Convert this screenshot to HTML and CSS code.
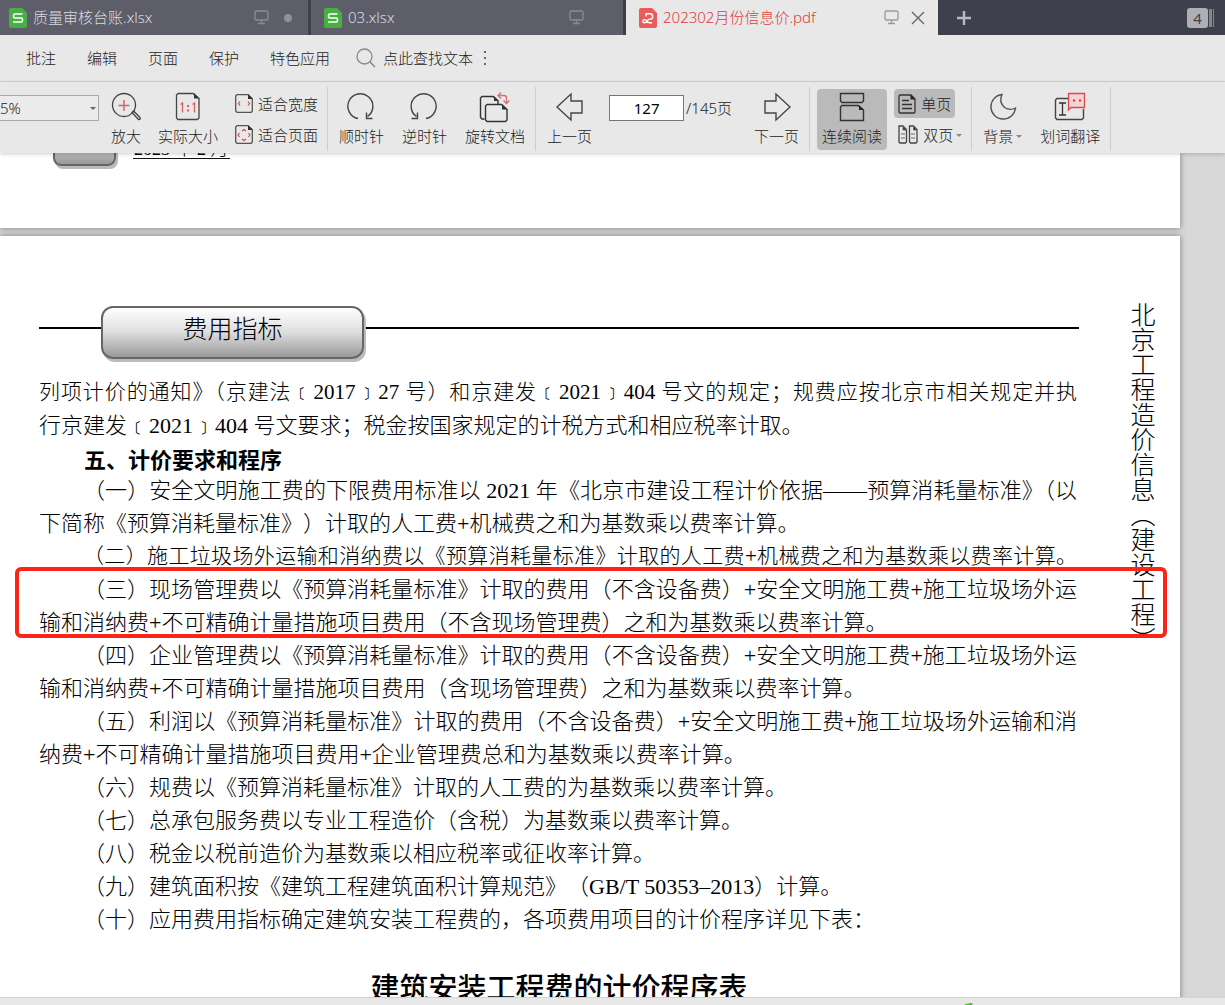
FILE: index.html
```html
<!DOCTYPE html>
<html lang="zh-CN">
<head>
<meta charset="utf-8">
<title>202302月份信息价.pdf</title>
<link rel="stylesheet" href="styles.css">
</head>
<body>
<nav class="tabs">
  <a class="tab" href="#">
    <svg width="18" height="20" viewBox="0 0 18 20"><path d="M2 0h11l5 5v13a2 2 0 0 1-2 2H2a2 2 0 0 1-2-2V2a2 2 0 0 1 2-2z" fill="#46b142"/><path d="M13.500 6H6q-1.500 0-1.500 1.500v1q0 1.500 1.500 1.500h6q1.500 0 1.500 1.500v1q0 1.500-1.500 1.500H4" fill="none" stroke="#fff" stroke-width="1.600"/></svg>
    <span class="name">质量审核台账.xlsx</span>
    <svg class="screen" width="15" height="15" viewBox="0 0 15 15"><path d="M2 1h11l1 1v7l-1 1H2l-1-1V2zM7.500 10v3.500M4 13.500h7" fill="none" stroke="#8a8b94" stroke-width="1.300"/></svg>
    <span class="dot"></span>
  </a>
  <a class="tab" href="#">
    <svg width="18" height="20" viewBox="0 0 18 20"><path d="M2 0h11l5 5v13a2 2 0 0 1-2 2H2a2 2 0 0 1-2-2V2a2 2 0 0 1 2-2z" fill="#46b142"/><path d="M13.500 6H6q-1.500 0-1.500 1.500v1q0 1.500 1.500 1.500h6q1.500 0 1.500 1.500v1q0 1.500-1.500 1.500H4" fill="none" stroke="#fff" stroke-width="1.600"/></svg>
    <span class="name">03.xlsx</span>
    <svg class="screen" width="15" height="15" viewBox="0 0 15 15"><path d="M2 1h11l1 1v7l-1 1H2l-1-1V2zM7.500 10v3.500M4 13.500h7" fill="none" stroke="#8a8b94" stroke-width="1.300"/></svg>
    <span class="dot none"></span>
  </a>
  <a class="tab active" href="#">
    <svg width="18" height="20" viewBox="0 0 18 20"><path d="M2 0h11l5 5v13a2 2 0 0 1-2 2H2a2 2 0 0 1-2-2V2a2 2 0 0 1 2-2z" fill="#ec5b5b"/><path d="M7 8.500V5.700h4a2.700 2.700 0 0 1 0 5.400C7.500 11.100 8.300 14.800 5.500 14.800a1.600 1.600 0 0 1 0-3.200C8 11.600 7.500 14.800 10.500 14.800H13" fill="none" stroke="#fff" stroke-width="1.400"/></svg>
    <span class="name">202302月份信息价.pdf</span>
    <svg class="screen" width="15" height="15" viewBox="0 0 15 15"><path d="M2 1h11l1 1v7l-1 1H2l-1-1V2zM7.500 10v3.500M4 13.500h7" fill="none" stroke="#9a9a9a" stroke-width="1.300"/></svg>
    <svg class="close" width="14" height="14" viewBox="0 0 14 14"><path d="M1 1l12 12M13 1L1 13" stroke="#666" stroke-width="1.400"/></svg>
  </a>
  <button class="add" aria-label="新建"><svg width="16" height="16" viewBox="0 0 16 16"><path d="M8 1v14M1 8h14" stroke="#b9bac0" stroke-width="2.500"/></svg></button>
  <button class="count">4</button>
  <span class="stack"></span>
</nav>

<nav class="menu">
  <a href="#">批注</a><a href="#">编辑</a><a href="#">页面</a><a href="#">保护</a><a href="#">特色应用</a>
  <button class="search"><svg width="20" height="20" viewBox="0 0 20 20"><circle cx="8.500" cy="8.500" r="7.500" fill="none" stroke="#8a8a8a" stroke-width="1.300"/><path d="M14 14l5 5" stroke="#8a8a8a" stroke-width="1.600"/></svg><span>点此查找文本</span></button>
  <button class="more" aria-label="更多"><svg width="4" height="16" viewBox="0 0 4 16"><path d="M1 1h2v2H1zM1 7h2v2H1zM1 13h2v2H1z" fill="#666"/></svg></button>
</nav>

<div class="toolbar">
  <div class="group first">
    <div class="zoom"><select aria-label="缩放"><option>5%</option></select></div>
    <button class="tool"><svg width="30" height="30" viewBox="1 0 30 30"><circle cx="14" cy="13" r="11.500" fill="none" stroke="#444" stroke-width="1.300"/><path d="M14 8v11M8.500 13.500h11" stroke="#d96060" stroke-width="1.400"/><path d="M22 20.500l1.500-1.500 6.500 6.500q1 2-1.500 2z" fill="none" stroke="#444" stroke-width="1.300"/></svg><span>放大</span></button>
    <button class="tool"><svg width="26" height="30" viewBox="0 0 26 30"><path d="M3 1.500h15l6 5V26l-1.500 1.500H3L1.500 26V3z" fill="none" stroke="#444" stroke-width="1.300"/><path d="M19 1l5.500 5.500H19z" fill="#333"/><path d="M5.500 12.500l2-1.500v9.500M17.500 12.500l2-1.500v9.500" fill="none" stroke="#d96060" stroke-width="1.300"/><path d="M12 13h2v2h-2zM12 17.500h2v2h-2z" fill="#d96060"/></svg><span>实际大小</span></button>
    <div class="pair">
      <button class="mini"><svg width="18" height="19" viewBox="0 0 18 19"><path d="M2 .7h11l4.300 4V17l-1 1.300H2L.7 17V2z" fill="none" stroke="#555" stroke-width="1.300"/><path d="M13 0l5 5h-5z" fill="#333"/><path d="M5 7.500L3.500 9.500 5 11.500M13 7.500l1.500 2-1.500 2" fill="none" stroke="#d94b4b" stroke-width="1.200"/></svg><span>适合宽度</span></button>
      <button class="mini"><svg width="18" height="19" viewBox="0 0 18 19"><path d="M2 .7h11l4.300 4V17l-1 1.300H2L.7 17V2z" fill="none" stroke="#555" stroke-width="1.300"/><path d="M13 0l5 5h-5z" fill="#333"/><path d="M4.500 8L3 10l1.500 2M13.500 8l1.500 2-1.500 2M7 6l2-1.500L11 6M7 14l2 1.500 2-1.500" fill="none" stroke="#d94b4b" stroke-width="1.200"/></svg><span>适合页面</span></button>
    </div>
  </div>
  <div class="group">
    <button class="tool"><svg width="32" height="30" viewBox="1 0 32 30"><path d="M13 26.500A12.500 12.500 0 1 1 22.500 24.500M21.500 20.500v6h6" fill="none" stroke="#444" stroke-width="1.400"/></svg><span>顺时针</span></button>
    <button class="tool"><svg width="32" height="30" viewBox="0 0 32 30"><path d="M17 26.500A12.500 12.500 0 1 0 7.500 24.500M8.500 20.500v6h-6" fill="none" stroke="#444" stroke-width="1.400"/></svg><span>逆时针</span></button>
    <button class="tool"><svg width="32" height="32" viewBox="1 0 32 32"><path d="M6.500 27H4l-1.500-1.500V6L4 4.500h11L20 9v3" fill="none" stroke="#333" stroke-width="1.400"/><path d="M16 4l5 5h-5zM24 12l5.500 5.500H24z" fill="#333"/><path d="M9 12.500h14.500l5.500 5V28l-1.500 1.500H9L7.500 28V14z" fill="none" stroke="#333" stroke-width="1.400"/><path d="M20 3.500h6q2.500 0 2.500 2.500v5M23 .5l-3 3 3 3M25.500 8.500l3 3 3-3" fill="none" stroke="#d97070" stroke-width="1.300"/></svg><span>旋转文档</span></button>
  </div>
  <div class="group">
    <button class="tool"><svg width="30" height="30" viewBox="0 0 30 30"><path d="M2 15L16 2v7h11v12H16v7z" fill="none" stroke="#444" stroke-width="1.400"/></svg><span>上一页</span></button>
    <label class="goto"><input type="text" value="127" aria-label="页码"><span>/145页</span></label>
    <button class="tool"><svg width="30" height="30" viewBox="0 0 30 30"><path d="M28 15L14 2v7H3v12h11v7z" fill="none" stroke="#444" stroke-width="1.400"/></svg><span>下一页</span></button>
  </div>
  <div class="group view">
    <button class="tool on"><svg width="26" height="30" viewBox="0 0 26 30"><path d="M1.500 1.500h23V9L23 10.500H3L1.500 9zM24.500 28.500h-23V15L3 13.500h16l5.500 4.500z" fill="none" stroke="#333" stroke-width="1.400"/><path d="M20 13l5 5h-5z" fill="#222"/></svg><span>连续阅读</span></button>
    <div class="pair">
      <button class="mini on"><svg width="18" height="20" viewBox="0 0 18 20"><path d="M2 1h11l4 4v13l-1 1H2l-1-1V2zM4 6.500h7M4 10.500h10M4 14.500h10" fill="none" stroke="#333" stroke-width="1.300"/><path d="M12.500.5l5 5h-5z" fill="#222"/></svg><span>单页</span></button>
      <button class="mini"><svg width="20" height="19" viewBox="0 0 20 19"><path d="M1 1h4l3.500 3.500V17l-1 1H2l-1-1zM11.500 1h4L19 4.500V17l-1 1h-5.500l-1-1z" fill="none" stroke="#444" stroke-width="1.300"/><path d="M5 1l3.500 4H5zM15.500 1L19 5h-3.500zM3 9h4M3 13h4M13 9h4M13 13h4" fill="#222" stroke="#666"/></svg><span>双页</span><i class="caret"></i></button>
    </div>
  </div>
  <div class="group">
    <button class="tool"><svg width="30" height="30" viewBox="0 0 30 30"><path d="M14 2.500A12.300 12.300 0 1 0 27.500 16Q22 19 16.500 15.500 10.500 10 14 2.500z" fill="none" stroke="#555" stroke-width="1.400"/></svg><span>背景<i class="caret"></i></span></button>
    <button class="tool"><svg width="32" height="30" viewBox="0 0 32 30"><path d="M14 6.500H3L1.500 8v18L3 27.500h25l1.500-1.500v-9" fill="none" stroke="#444" stroke-width="1.400"/><path d="M5 11h7M8.500 11v12M5 23h7" stroke="#333" stroke-width="1.300"/><path d="M14.500 1.500h16v14H17l-2.500 2.500z" fill="#f3d4d4" stroke="#d94b4b" stroke-width="1.300"/><path d="M19 7.500h2v2h-2zM25 7.500h2v2h-2z" fill="#d03030"/></svg><span>划词翻译</span></button>
  </div>
</div>

<main class="viewer">
  <section class="page previous">
    <div class="plate small"></div>
    <span class="issue">2023 年 2 月</span>
  </section>
  <section class="page current">
    <div class="content">
      <header class="banner"><h1 class="plate">费用指标</h1></header>
      <div class="text">
        <p class="full tight">列项计价的通知》（京建法﹝2017﹞27 号）和京建发﹝2021﹞404 号文的规定；规费应按北京市相关规定并执</p>
        <p>行京建发﹝2021﹞404 号文要求；税金按国家规定的计税方式和相应税率计取。</p>
        <h2>五、计价要求和程序</h2>
        <p class="full indent">（一）安全文明施工费的下限费用标准以 2021 年《北京市建设工程计价依据——预算消耗量标准》（以</p>
        <p>下简称《预算消耗量标准》）计取的人工费+机械费之和为基数乘以费率计算。</p>
        <p class="full indent tight">（二）施工垃圾场外运输和消纳费以《预算消耗量标准》计取的人工费+机械费之和为基数乘以费率计算。</p>
        <div class="marked">
          <p class="full indent">（三）现场管理费以《预算消耗量标准》计取的费用（不含设备费）+安全文明施工费+施工垃圾场外运</p>
          <p>输和消纳费+不可精确计量措施项目费用（不含现场管理费）之和为基数乘以费率计算。</p>
        </div>
        <p class="full indent">（四）企业管理费以《预算消耗量标准》计取的费用（不含设备费）+安全文明施工费+施工垃圾场外运</p>
        <p>输和消纳费+不可精确计量措施项目费用（含现场管理费）之和为基数乘以费率计算。</p>
        <p class="full indent">（五）利润以《预算消耗量标准》计取的费用（不含设备费）+安全文明施工费+施工垃圾场外运输和消</p>
        <p>纳费+不可精确计量措施项目费用+企业管理费总和为基数乘以费率计算。</p>
        <p class="indent">（六）规费以《预算消耗量标准》计取的人工费的为基数乘以费率计算。</p>
        <p class="indent">（七）总承包服务费以专业工程造价（含税）为基数乘以费率计算。</p>
        <p class="indent">（八）税金以税前造价为基数乘以相应税率或征收率计算。</p>
        <p class="indent">（九）建筑面积按《建筑工程建筑面积计算规范》（GB/T 50353–2013）计算。</p>
        <p class="indent">（十）应用费用指标确定建筑安装工程费的，各项费用项目的计价程序详见下表：</p>
      </div>
      <h3>建筑安装工程费的计价程序表</h3>
    </div>
    <aside class="spine">北京工程造价信息（建设工程）</aside>
  </section>
</main>
<footer class="status"><svg width="12" height="3" viewBox="0 0 12 3"><path d="M0 3Q4 0 11 0L9 3z" fill="#3fc01e"/></svg></footer>
</body>
</html>
```
FILE: styles.css
```css
* { box-sizing: border-box; }
body {
  margin: 0;
  height: 100vh;
  display: flex;
  flex-direction: column;
  overflow: hidden;
  background: #e8e8e8;
  color: #222;
  font: 300 15px/20px "Noto Sans", "Noto Sans CJK SC", sans-serif;
}
a { color: inherit; text-decoration: none; }
button { border: 0; padding: 0; background: none; color: inherit; font: inherit; }
svg { flex: none; display: block; }

.tabs { display: flex; flex: none; height: 35px; background: #3e414d; }
.tab {
  display: flex;
  align-items: center;
  flex: 0 1 315px;
  padding: 0 16px 0 9px;
  background: #5d5e69;
  color: #dcdce0;
  border-right: 3px solid #3e404c;
}
.tab:nth-child(2) { padding-left: 13px; }
.tab:first-child { flex-basis: 311px; }
.tab.active { flex-basis: 312px; padding: 0 13px; border: 0; background: #e8e8e8; color: #dd3b40; }
.name { flex: 1; margin-left: 6px; padding-bottom: 2px; white-space: nowrap; }
.dot { width: 8px; height: 8px; margin: 0 0 0 15px; border-radius: 50%; background: #8f9098; }
.dot.none { background: none; }
.close { margin-left: 12px; }
.add { margin-left: 18px; }
.count {
  align-self: center;
  width: 21px;
  height: 20px;
  margin-left: auto;
  border-radius: 3px;
  background: #aeafb5;
  color: #3e414d;
  font-weight: 400;
}
.stack { align-self: center; width: 5px; height: 18px; margin: 0 11px 0 1px; border: solid #85878f; border-width: 0 1px 0 3px; }

.menu { display: flex; flex: none; align-items: center; height: 47px; padding-left: 26px; border-bottom: 1px solid #d6d6d6; }
.menu a { margin-right: 31px; }
.search { display: flex; align-items: center; gap: 7px; margin-left: -5px; }
.more { margin-left: 10px; }

.toolbar {
  position: relative;
  z-index: 1;
  display: flex;
  flex: none;
  height: 71px;
  padding: 5px 0 2px;
  background: #e8e8e8;
  box-shadow: 0 1px 4px rgba(0, 0, 0, .2);
}
.group { display: flex; align-items: flex-start; gap: 18px; padding: 2px 10px 0 11px; border-right: 1px solid #cdcdcd; }
.group.first { gap: 17px; padding: 2px 9px 0 0; }
.zoom { position: relative; width: 94px; height: 26px; margin-top: 6px; }
.zoom select {
  appearance: none;
  width: 99px;
  height: 26px;
  padding: 0;
  border: 1px solid #aaa;
  border-left: 0;
  border-radius: 0;
  background: #ebebeb;
  color: #222;
  font: inherit;
}
.zoom::after { content: ""; position: absolute; left: 90px; top: 12px; border: 3px solid transparent; border-top-color: #666; }
.tool { display: flex; flex-direction: column; align-items: center; height: 61px; padding-top: 3px; white-space: nowrap; }
.tool svg { margin-bottom: auto; }
.tool span { height: 24px; }
.pair { display: flex; flex-direction: column; gap: 2px; align-items: flex-start; }
.mini { display: flex; align-items: center; gap: 5px; height: 29px; white-space: nowrap; }
.goto { display: flex; align-items: center; gap: 2px; margin: 6px 0 0 -1px; }
.goto span { min-width: 50px; }
.goto input { width: 75px; height: 26px; border: 1px solid #777; background: #fff; color: #000; text-align: center; font: 400 15px/20px "Noto Sans", sans-serif; }
.view { gap: 7px; padding: 2px 9px 0 7px; }
.view .tool { width: 70px; }
.view .mini { padding: 0 4px; }
.on { border-radius: 4px; background: #bababa; }
.caret { display: inline-block; margin: 5px 0 0 -2px; border: 3px solid transparent; border-top-color: #888; vertical-align: middle; }
.tool .caret { margin: 0 0 0 3px; }
.view .mini .caret { margin-right: -4px; }

.viewer { flex: 1; min-height: 0; overflow: hidden; background: #d7d7d7; }
.page { margin-right: 45px; background: #fff; box-shadow: 0 0 6px rgba(0, 0, 0, .45); color: #000; }
.previous { display: flex; align-items: flex-start; height: 75px; margin-bottom: 8px; padding-left: 53px; }
.plate {
  margin: 0;
  width: 263px;
  height: 53px;
  border: 2px solid #666;
  border-radius: 12px;
  background: linear-gradient(#fff, #ddd 50%, #999);
  box-shadow: 2px 3px 0 #bbb;
  text-align: center;
  font: 300 25px/38px "Noto Sans CJK SC", sans-serif;
}
.plate.small { width: 63px; margin-top: -40px; border-radius: 8px; }
.issue { margin: -13px 0 0 17px; padding: 0 1px; border-bottom: 1px solid #111; font: 300 18px/18px "Liberation Serif", "Noto Sans CJK SC", serif; }

.current { display: flex; padding: 66px 17px 0 39px; min-height: 800px; }
.content { flex: 1; min-width: 0; }
.banner { padding: 4px 0 0 62px; background: linear-gradient(#000, #000) 0 25px / 100% 2px no-repeat; }
.text { margin: 17px 2px 0 0; font: 300 22px/33px "Liberation Serif", "Noto Sans CJK SC", serif; }
.text p, .text h2 { margin: 0; white-space: nowrap; text-spacing-trim: space-all; }
.text h2 { padding-left: 45px; font: 700 22px/32px "Noto Sans CJK SC", sans-serif; }
.text .indent { padding-left: 44px; }
.text .full { text-align: justify; text-align-last: justify; white-space: normal; text-spacing-trim: normal; }
.text .tight { font-size: 21px; }
.marked { position: relative; }
.marked::after { content: ""; position: absolute; inset: -6px -90px 1px -24px; border: 4px solid #fb2416; border-radius: 6px; }
h3 { margin: 30px 0 0; text-align: center; font: 500 29px/40px "Noto Sans CJK SC", sans-serif; }
.spine { width: 40px; margin-left: 44px; writing-mode: vertical-rl; font: 300 25px/40px "Noto Sans CJK SC", sans-serif; }

.status { flex: none; height: 8px; padding: 5px 0 0 962px; border-top: 1px solid #d3d3d3; }
```
